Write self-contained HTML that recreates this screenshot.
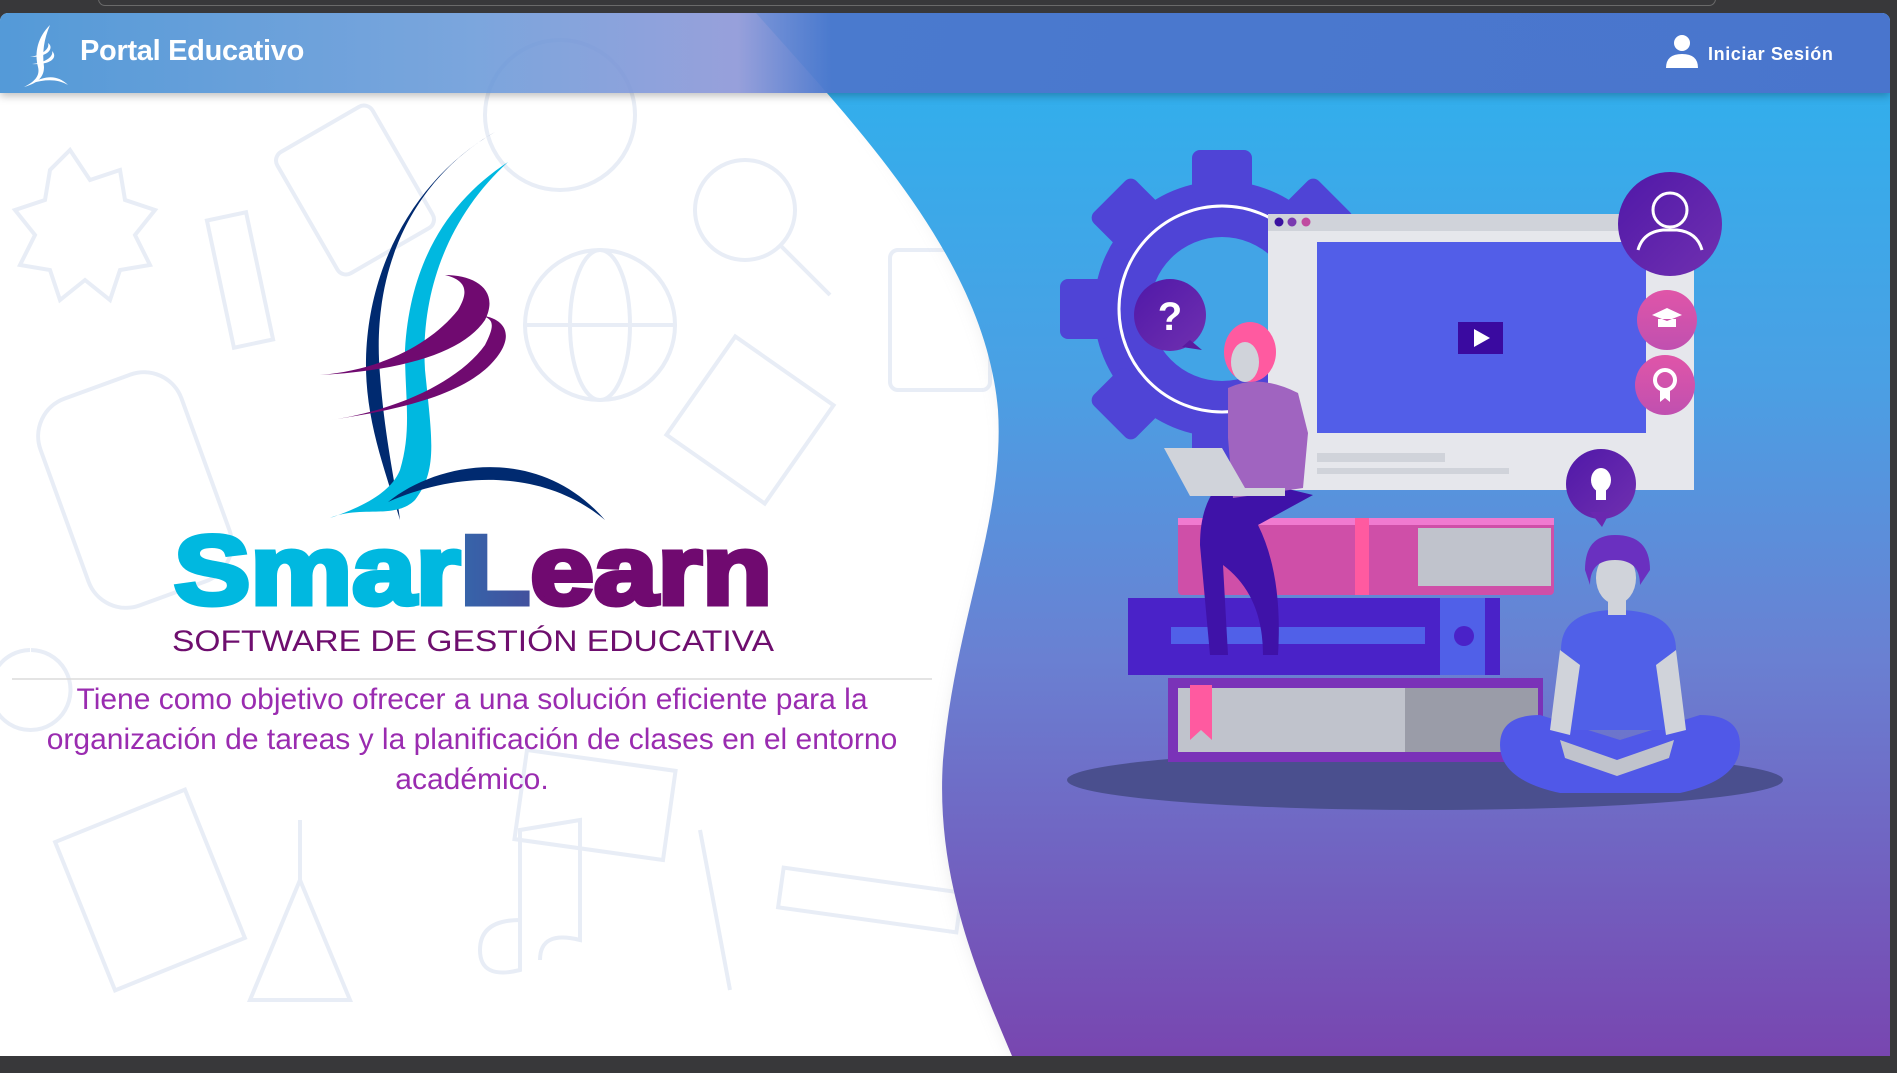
<!DOCTYPE html>
<html><head><meta charset="utf-8">
<style>
html,body{margin:0;padding:0;width:1897px;height:1073px;overflow:hidden;background:#38383a;font-family:"Liberation Sans",sans-serif}
#main{position:absolute;left:0;top:13px;width:1890px;height:1043px;background:#fff;border-radius:8px 8px 0 0;overflow:hidden}
#topline{position:absolute;left:98px;top:-8px;width:1618px;height:14px;border:1.5px solid #6a6a6a;border-radius:10px;box-sizing:border-box}
.hdr{position:absolute;left:0;top:0;width:1890px;height:80px;background:linear-gradient(90deg,rgba(60,140,210,.88) 0%,rgba(100,150,215,.85) 25%,rgba(140,150,215,.9) 39%,rgba(75,120,205,.97) 44%,rgba(74,115,204,.97) 100%);box-shadow:0 3px 8px rgba(0,0,0,.25)}
.ttl{position:absolute;left:80px;top:22px;color:#fff;font-weight:bold;font-size:29px;letter-spacing:-0.3px}
.login{position:absolute;left:1708px;top:31px;color:#fff;font-weight:bold;font-size:18px;letter-spacing:0.6px}
p.desc{position:absolute;left:22px;width:900px;margin:0;text-align:center;color:#9a2cb0;font-size:30px;line-height:40px}
</style></head><body>
<div id="topline"></div>
<div id="main">
<svg width="1890" height="1043" viewBox="0 13 1890 1043" style="position:absolute;left:0;top:0">
<defs>
<linearGradient id="bg" x1="0" y1="0" x2="0" y2="1">
<stop offset="0" stop-color="#2cb2ee"/><stop offset="0.35" stop-color="#4aa0e4"/><stop offset="0.62" stop-color="#6a80d2"/><stop offset="1" stop-color="#7846b0"/>
</linearGradient>
<linearGradient id="lg" x1="0" x2="1"><stop offset="0" stop-color="#00b8e0"/><stop offset="1" stop-color="#700a70"/></linearGradient>
<linearGradient id="pc" x1="0" y1="0" x2="1" y2="1"><stop offset="0" stop-color="#5018a8"/><stop offset="1" stop-color="#7030b0"/></linearGradient>
<linearGradient id="pk" x1="0" y1="0" x2="0" y2="1"><stop offset="0" stop-color="#e055a8"/><stop offset="1" stop-color="#c050b0"/></linearGradient>
<filter id="bl"><feGaussianBlur stdDeviation="10"/></filter>
</defs>
<g fill="none" stroke="#e8edf6" stroke-width="4">
<circle cx="560" cy="115" r="75"/><circle cx="745" cy="210" r="50"/><line x1="780" y1="245" x2="830" y2="295"/>
<circle cx="600" cy="325" r="75"/><ellipse cx="600" cy="325" rx="30" ry="75"/><line x1="525" y1="325" x2="675" y2="325"/>
<rect x="300" y="120" width="110" height="140" rx="10" transform="rotate(-30 355 190)"/>
<rect x="220" y="215" width="40" height="130" transform="rotate(-12 240 280)"/>
<rect x="60" y="380" width="150" height="220" rx="40" transform="rotate(-20 135 490)"/>
<rect x="690" y="360" width="120" height="120" transform="rotate(35 750 420)"/>
<rect x="890" y="250" width="100" height="140" rx="8"/>
<rect x="80" y="810" width="140" height="160" transform="rotate(-22 150 890)"/>
<path d="M300 820 l0 60 -50 120 h100 l-50-120"/>
<rect x="520" y="760" width="150" height="90" transform="rotate(8 595 805)"/>
<path d="M520 920 q-40 0-40 30 q0 30 40 20 v-140 l60-10 v120 q-40-10-40 20"/>
<rect x="780" y="880" width="180" height="40" transform="rotate(8 870 900)"/>
<path d="M70 150 l20 30 30-10 5 30 30 10-20 25 15 30-30 5-10 30-25-20-25 20-10-30-30-5 15-30-20-25 30-10 5-30z"/>
<path d="M700 830 l30 160 M30 650 a40 40 0 1 0 1 0"/>
</g>
<path d="M790 13 C880 130 990 260 1010 420 C1020 520 965 620 950 760 C940 880 990 980 1020 1056 L1060 1056 L1060 13Z" fill="#c8c8cc" filter="url(#bl)" opacity=".8"/>
<path d="M756 13 C860 130 985 260 998 410 C1005 520 955 620 943 760 C935 880 980 980 1012 1056 L1890 1056 L1890 13Z" fill="url(#bg)"/>
<ellipse cx="1425" cy="780" rx="358" ry="30" fill="#4a4f8e"/>
<g fill="#4f44d6">
<circle cx="1222" cy="309" r="128"/>
<rect x="1192" y="150" width="60" height="50" rx="8"/>
<rect x="1192" y="418" width="60" height="50" rx="8"/>
<rect x="1060" y="279" width="50" height="60" rx="8"/>
<rect x="1334" y="279" width="50" height="60" rx="8"/>
<rect x="1192" y="150" width="60" height="50" rx="8" transform="rotate(45 1222 309)"/>
<rect x="1192" y="150" width="60" height="50" rx="8" transform="rotate(-45 1222 309)"/>
<rect x="1192" y="150" width="60" height="50" rx="8" transform="rotate(135 1222 309)"/>
<rect x="1192" y="150" width="60" height="50" rx="8" transform="rotate(-135 1222 309)"/>
</g>
<circle cx="1222" cy="309" r="72" fill="#42a4e6"/>
<circle cx="1222" cy="309" r="103" fill="none" stroke="#fff" stroke-width="3"/>
<rect x="1268" y="214" width="426" height="276" fill="#e6e7ec"/>
<rect x="1268" y="214" width="426" height="17" fill="#d0d3da"/>
<circle cx="1279" cy="222" r="4.5" fill="#3a12a0"/><circle cx="1292" cy="222" r="4.5" fill="#7a3ab0"/><circle cx="1306" cy="222" r="4.5" fill="#c04aa0"/>
<rect x="1317" y="242" width="329" height="191" fill="#525ee8"/>
<rect x="1458" y="322" width="45" height="32" fill="#3a0aa0"/>
<path d="M1474 329 l16 9 -16 9z" fill="#fff"/>
<rect x="1317" y="453" width="128" height="9" fill="#d0d3da"/><rect x="1317" y="468" width="192" height="6" fill="#d0d3da"/>
<circle cx="1670" cy="224" r="52" fill="url(#pc)"/>
<circle cx="1670" cy="210" r="17" fill="none" stroke="#fff" stroke-width="3"/>
<path d="M1638 250 q5-18 25-20 h14 q20 2 25 20" fill="none" stroke="#fff" stroke-width="3"/>
<circle cx="1667" cy="320" r="30" fill="url(#pk)"/>
<path d="M1652 315 l15-7 15 7-15 6z M1658 319 v8 h18 v-8" fill="#fff"/>
<circle cx="1665" cy="385" r="30" fill="url(#pk)"/>
<circle cx="1665" cy="380" r="10" fill="none" stroke="#fff" stroke-width="4"/><path d="M1660 390 v12 l5-4 5 4 v-12" fill="#fff"/>
<circle cx="1170" cy="315" r="36" fill="url(#pc)"/><path d="M1190 340 l12 10 -20-3z" fill="#5a1aa0"/>
<text x="1170" y="330" fill="#fff" font-size="40" font-weight="bold" text-anchor="middle">?</text>
<circle cx="1601" cy="484" r="35" fill="url(#pc)"/><path d="M1590 512 l12 15 8-15z" fill="#6a28b0"/>
<ellipse cx="1601" cy="480" rx="10" ry="12" fill="#fff"/><rect x="1596" y="490" width="10" height="10" fill="#fff"/>
<rect x="1178" y="518" width="376" height="77" rx="4" fill="#cf4fa8"/>
<rect x="1178" y="518" width="376" height="7" fill="#f07ad0"/>
<rect x="1355" y="518" width="14" height="77" fill="#ff5aa0"/>
<rect x="1418" y="528" width="133" height="58" fill="#c0c3cc"/>
<rect x="1128" y="598" width="372" height="77" fill="#4a22c8"/>
<rect x="1440" y="598" width="45" height="77" fill="#5060e8"/>
<circle cx="1464" cy="636" r="10" fill="#4a22c8"/>
<rect x="1171" y="627" width="254" height="17" fill="#5060e8"/>
<rect x="1168" y="678" width="375" height="84" fill="#7a32b8"/>
<rect x="1178" y="688" width="360" height="64" fill="#c0c3cc"/>
<rect x="1405" y="688" width="133" height="64" fill="#9a9ca8"/>
<path d="M1190 685 h22 v55 l-11-10 -11 10z" fill="#ff5aa0"/>
<path d="M1230 475 q-30 20-30 70 l10 110 h18 l-5-90 q40 30 40 90 h15 q5-80-20-130 l55-30z" fill="#3f12a8"/>
<path d="M1228 388 q30-15 70 5 l10 40 -5 55 -70 10 -5-60z" fill="#a064c0"/>
<ellipse cx="1250" cy="352" rx="26" ry="30" fill="#ff5aa0"/>
<ellipse cx="1245" cy="362" rx="14" ry="20" fill="#d0d3da"/>
<path d="M1164 448 h58 l23 40 h40 v8 h-95z" fill="#d0d3da"/>
<path d="M1500 745 q0-30 40-30 l80 25 80-25 q40 0 40 30 q0 35-60 48 h-120 q-60-13-60-48z" fill="#5058e8"/>
<path d="M1561 650 q0-40 55-40 q60 0 60 40 l0 80 h-115z" fill="#5060e8"/>
<path d="M1560 650 l-10 80 20 5 10-70z M1676 650 l10 80 -20 5 -10-70z" fill="#d0d3da"/>
<rect x="1608" y="590" width="18" height="25" fill="#d0d3da"/>
<ellipse cx="1616" cy="578" rx="20" ry="26" fill="#d0d3da"/>
<path d="M1585 570 q0-35 30-35 q35 0 35 35 l-10 15 q0-25-25-25 q-25 0-25 25z" fill="#6a30c0"/>
<path d="M1560 740 l57 20 57-20 -5 18 -52 18 -52-18z" fill="#c0c3cc"/>
<path d="M495 132 C420 175 370 260 380 375 C385 440 395 480 400 520 C385 470 365 420 366 360 C368 260 420 175 495 132Z" fill="#002a70"/>
<path d="M508 162 C450 215 420 290 425 370 C432 440 438 470 415 500 C395 520 360 505 330 518 C368 505 392 490 400 470 C412 430 405 400 405 350 C410 260 450 200 508 162Z" fill="#00b8e0"/>
<path d="M320 375 C380 370 430 345 458 310 C470 290 465 280 445 275 C475 275 500 290 485 320 C465 350 410 370 320 375Z" fill="#700a70"/>
<path d="M330 420 C400 410 460 380 485 345 C495 325 495 318 478 315 C510 318 515 340 490 365 C460 395 400 410 330 420Z" fill="#700a70"/>
<path d="M388 502 C440 460 540 445 605 520 C545 470 460 470 388 502Z" fill="#002a70"/>
<text x="174" y="604" font-size="98" font-weight="900" textLength="598" lengthAdjust="spacingAndGlyphs" stroke-width="5" font-family="Liberation Sans,sans-serif"><tspan fill="#00b8e0" stroke="#00b8e0">Smar</tspan><tspan fill="url(#lg)" stroke="url(#lg)">L</tspan><tspan fill="#700a70" stroke="#700a70">earn</tspan></text>
<text x="172" y="651" font-size="30" fill="#6e0e6e" textLength="602" lengthAdjust="spacingAndGlyphs" font-family="Liberation Sans,sans-serif">SOFTWARE DE GESTIÓN EDUCATIVA</text>
<line x1="12" y1="679" x2="932" y2="679" stroke="#dcdcdc" stroke-width="1.5"/>
</svg>
<p class="desc" style="top:667px">Tiene como objetivo ofrecer a una solución eficiente para la organización de tareas y la planificación de clases en el entorno académico.</p>
<div class="hdr">
<svg width="60" height="70" style="position:absolute;left:16px;top:4px" viewBox="0 0 60 70">
<path d="M34 8 C22 20 18 35 22 50 C24 58 20 64 8 70 C22 66 28 60 28 50 C26 35 28 22 34 8Z" fill="#fff"/>
<path d="M14 40 C26 38 34 32 32 26 C38 30 34 40 14 40Z M16 47 C28 46 38 40 36 34 C42 40 36 48 16 47Z" fill="#fff"/>
<path d="M16 66 C30 58 42 58 52 68 C42 62 30 62 16 66Z" fill="#fff"/>
</svg>
<div class="ttl">Portal Educativo</div>
<svg width="36" height="36" style="position:absolute;left:1664px;top:20px" viewBox="0 0 36 36">
<circle cx="18" cy="10" r="8" fill="#fff"/><path d="M2 35 q0-14 16-14 q16 0 16 14z" fill="#fff"/>
</svg>
<div class="login">Iniciar Sesión</div>
</div>
</div>
</body></html>
